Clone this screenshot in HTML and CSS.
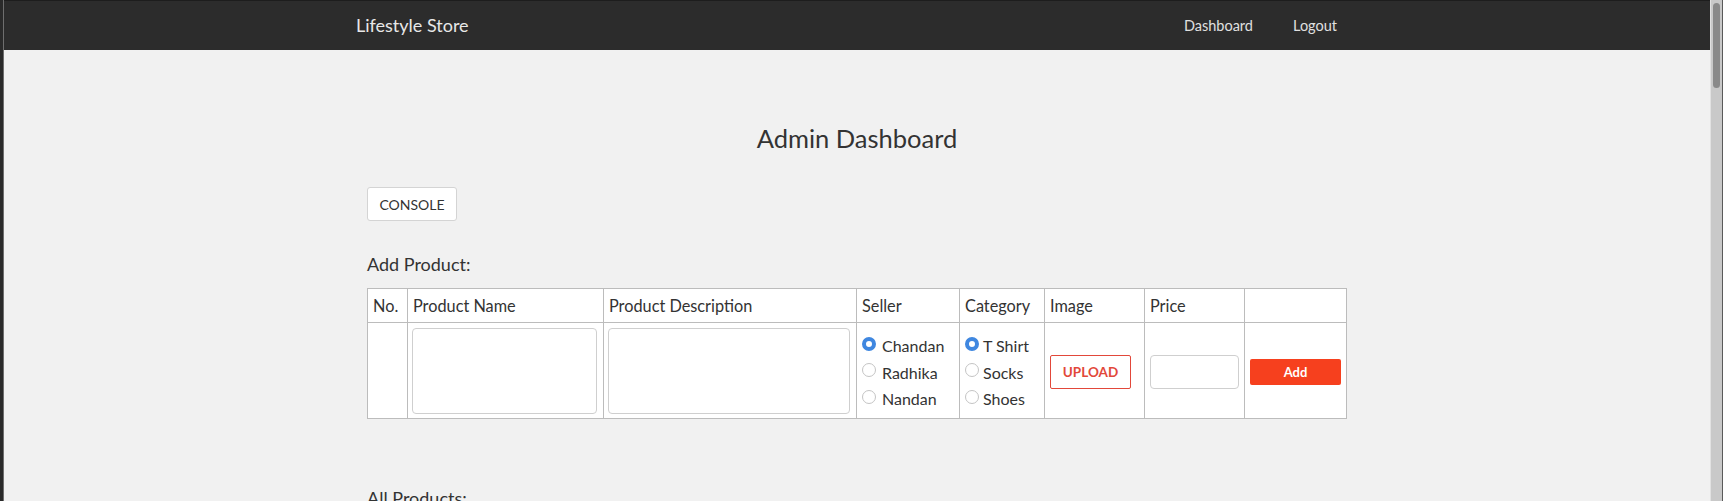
FILE: index.html
```html
<!DOCTYPE html>
<html lang="en">
<head>
<meta charset="utf-8">
<title>Admin Dashboard</title>
<link rel="stylesheet" href="styles.css">
</head>
<body>
<div class="window">
  <div class="edge"></div>
  <div class="viewport">
    <nav class="navbar">
      <div class="nav-inner">
        <a class="brand" href="#">Lifestyle Store</a>
        <ul class="nav-links">
          <li><a href="#">Dashboard</a></li>
          <li><a href="#">Logout</a></li>
        </ul>
      </div>
    </nav>
    <main class="container">
      <h1 class="title">Admin Dashboard</h1>
      <button class="btn-console" type="button">CONSOLE</button>
      <p class="section-label">Add Product:</p>
      <table class="product-table">
        <colgroup>
          <col class="c-no"><col class="c-name"><col class="c-desc"><col class="c-seller">
          <col class="c-cat"><col class="c-img"><col class="c-price"><col class="c-act">
        </colgroup>
        <thead>
          <tr>
            <th>No.</th>
            <th>Product Name</th>
            <th>Product Description</th>
            <th>Seller</th>
            <th>Category</th>
            <th>Image</th>
            <th>Price</th>
            <th></th>
          </tr>
        </thead>
        <tbody>
          <tr>
            <td></td>
            <td><textarea class="field-area"></textarea></td>
            <td><textarea class="field-area"></textarea></td>
            <td>
              <div class="radio-group">
                <label class="radio"><input type="radio" name="seller" checked><span>Chandan</span></label>
                <label class="radio"><input type="radio" name="seller"><span>Radhika</span></label>
                <label class="radio"><input type="radio" name="seller"><span>Nandan</span></label>
              </div>
            </td>
            <td>
              <div class="radio-group tight">
                <label class="radio"><input type="radio" name="cat" checked><span>T Shirt</span></label>
                <label class="radio"><input type="radio" name="cat"><span>Socks</span></label>
                <label class="radio"><input type="radio" name="cat"><span>Shoes</span></label>
              </div>
            </td>
            <td><button class="btn-upload" type="button">UPLOAD</button></td>
            <td><input class="field-price" type="text"></td>
            <td><button class="btn-add" type="button">Add</button></td>
          </tr>
        </tbody>
      </table>
      <p class="section-label all">All Products:</p>
    </main>
  </div>
  <div class="scrollbar"><div class="thumb"></div></div>
</div>
</body>
</html>
```

FILE: styles.css
```css
html, body {
  margin: 0;
  padding: 0;
  height: 501px;
  overflow: hidden;
  background: #f1f1f1;
  font-family: Lato, "Open Sans", Arial, sans-serif;
  color: #333;
}

.window {
  display: flex;
  height: 501px;
}

.edge {
  width: 4px;
  flex: none;
  background: linear-gradient(to right, #2a2a2a 0, #2a2a2a 3px, #6e6e6e 3px, #6e6e6e 4px);
}

.viewport {
  flex: 1;
  min-width: 0;
  overflow: hidden;
}

.scrollbar {
  width: 13px;
  flex: none;
  background: #c9c9c9;
  border-left: 1px solid #e2e2e2;
  padding: 3px 3px 0 2px;
  box-sizing: border-box;
  position: relative;
}
.scrollbar::after {
  content: "";
  position: absolute;
  right: 0;
  top: 0;
  bottom: 0;
  width: 1px;
  background: #5a5a5a;
}
.thumb {
  width: 7px;
  height: 85px;
  border-radius: 4px;
  background: #8a8a8a;
}

/* navbar */
.navbar {
  height: 50px;
  background: #2c2c2c;
  border-top: 1px solid #1d1d1d;
  box-sizing: border-box;
}
.nav-inner {
  width: 1000px;
  margin: 0 auto;
  height: 100%;
  display: flex;
  align-items: center;
  justify-content: space-between;
}
.brand {
  color: #e8e8e8;
  text-decoration: none;
  font-size: 18px;
  margin: -2px 0 0 -1px;
}
.nav-links {
  list-style: none;
  margin: -3px 0 0 0;
  padding: 0 20px 0 0;
  display: flex;
  gap: 40px;
}
.nav-links a {
  color: #e0e0e0;
  text-decoration: none;
  font-size: 14.5px;
}

/* main */
.container {
  width: 980px;
  margin: 0 auto;
}
.title {
  margin: 73px 0 0 0;
  font-size: 25.5px;
  font-weight: 400;
  line-height: 30px;
  text-align: center;
  color: #333;
}
.btn-console {
  display: block;
  margin-top: 34px;
  width: 90px;
  height: 34px;
  background: #fff;
  border: 1px solid #d4d4d4;
  border-radius: 3px;
  font-family: inherit;
  font-size: 14px;
  color: #333;
  padding: 0;
}
.section-label {
  margin: 31px 0 0 0;
  font-size: 18px;
  line-height: 24px;
}
.section-label.all {
  margin-top: 67px;
}

/* table */
.product-table {
  margin-top: 12px;
  width: 979px;
  table-layout: fixed;
  border-collapse: collapse;
  background: #fff;
}
.c-no { width: 40px; }
.c-name { width: 196px; }
.c-desc { width: 253px; }
.c-seller { width: 103px; }
.c-cat { width: 85px; }
.c-img { width: 100px; }
.c-price { width: 100px; }
.c-act { width: 102px; }

.product-table th,
.product-table td {
  border: 1px solid #bcbcbc;
  padding: 5px;
  text-align: left;
  vertical-align: middle;
}
.product-table th {
  font-weight: 400;
  font-size: 16.3px;
  line-height: 23px;
  color: #333;
}
.product-table td {
  height: 85px;
  padding-bottom: 4px;
}

.field-area {
  display: block;
  width: 100%;
  height: 86px;
  box-sizing: border-box;
  border: 1px solid #cfcfcf;
  border-radius: 4px;
  resize: none;
  margin-left: -1px;
  background: #fff;
}

.radio-group {
  padding-top: 2px;
}
.radio {
  display: flex;
  align-items: center;
  height: 26.5px;
  font-size: 16px;
  color: #333;
}
.radio input {
  appearance: none;
  -webkit-appearance: none;
  width: 14px;
  height: 14px;
  margin: -4px 6px 0 0;
  border-radius: 50%;
  border: 1px solid #c4c4c4;
  background: #fff;
  box-sizing: border-box;
  flex: none;
}
.radio input:checked {
  border: 4px solid #3f87e0;
}
.radio-group.tight .radio input {
  margin-right: 4px;
}

.btn-upload {
  width: 81px;
  height: 34px;
  background: #fff;
  border: 1px solid #e2483a;
  border-radius: 2px;
  color: #e2483a;
  font-family: inherit;
  font-weight: 700;
  font-size: 13.5px;
  padding: 0;
  margin-top: 2px;
}
.field-price {
  display: block;
  width: 89px;
  height: 34px;
  box-sizing: border-box;
  border: 1px solid #cfcfcf;
  border-radius: 4px;
  margin-top: 2px;
}
.btn-add {
  display: block;
  width: 100%;
  height: 26px;
  background: #f6401e;
  color: #fff;
  border: none;
  border-radius: 2px;
  font-family: inherit;
  font-weight: 700;
  font-size: 13px;
  padding: 0;
  margin-top: 2px;
}
```
